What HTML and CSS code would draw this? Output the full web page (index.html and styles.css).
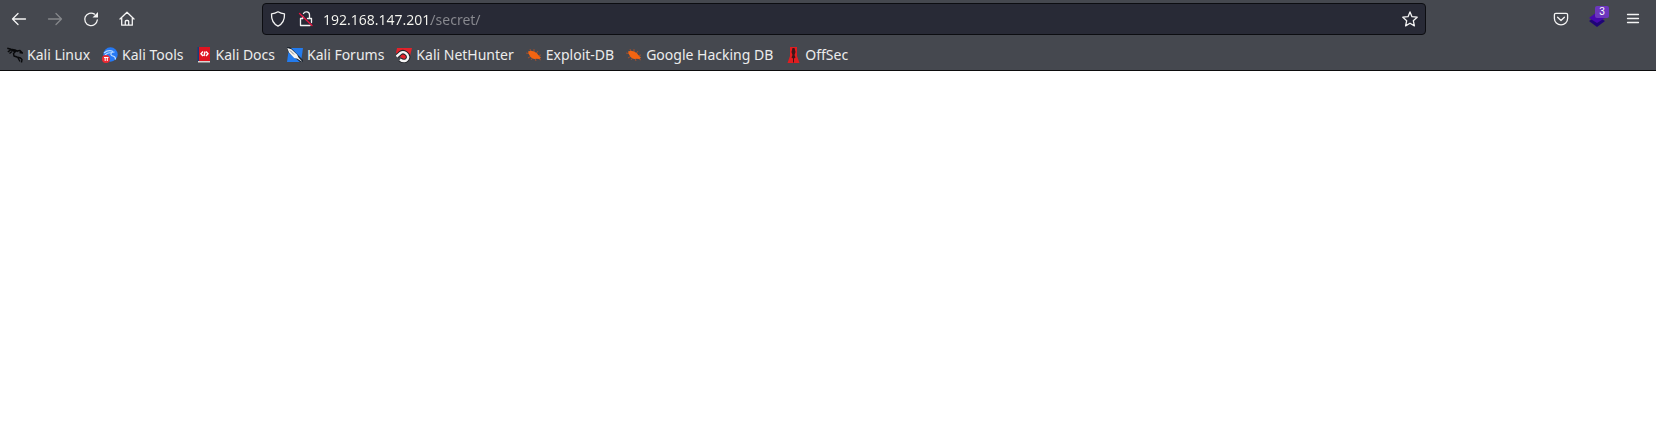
FILE: index.html
```html
<!DOCTYPE html>
<html lang="en">
<head>
    <meta charset="UTF-8">
    <meta name="viewport" content="width=device-width, initial-scale=1.0">
    <title>192.168.147.201/secret/</title>
    <link rel="stylesheet" href="styles.css">
</head>
<body>
    <header class="browser">
        <div class="toolbar">
            <button class="tool" aria-label="Back">
                <svg class="icon" viewBox="0 0 16 16"><path d="M14.500 8H1.500M7 2.500L1.500 8 7 13.500"/></svg>
            </button>
            <button class="tool" aria-label="Forward" disabled>
                <svg class="icon" viewBox="0 0 16 16"><path d="M1.500 8h13M9 2.500L14.500 8 9 13.500"/></svg>
            </button>
            <button class="tool" aria-label="Reload">
                <svg class="icon" viewBox="0 0 16 16"><path d="M11.500 3.100A6.300 6.300 0 1 0 14.300 9"/><path class="solid" d="M15 1v5.500H9.500z"/></svg>
            </button>
            <button class="tool" aria-label="Home">
                <svg class="icon" viewBox="0 0 16 16"><path d="M1 8l7-6.800L15 8M2.700 7v7.200h10.600V7M6.300 14v-3.500q0-1 1-1h1.400q1 0 1 1V14"/></svg>
            </button>
            <div class="spacer"></div>
            <div class="urlbar">
                <button class="inner" aria-label="Tracking protection">
                    <svg class="icon" viewBox="0 0 16 16"><path d="M8 .8c2 1.300 4.200 1.900 6.500 2 .2 5.400-1.500 10-6.500 12.300C3 12.800 1.300 8.200 1.500 2.800 3.800 2.700 6 2.100 8 .8z"/></svg>
                </button>
                <button class="inner inner-lock" aria-label="Connection not secure">
                    <svg class="icon" viewBox="0 0 16 16"><path d="M5.500 2.500A3.200 3.200 0 0 1 11.500 4.200V7.500M9.500 7.500h4v4M4.800 7.500H2.500v7h9.500M4.800 7.500V5.500"/><path class="slash" d="M1.500 2.500l12.500 12"/></svg>
                </button>
                <input class="address" type="text" aria-label="Address" value="192.168.147.201/secret/">
                <button class="inner" aria-label="Bookmark this page">
                    <svg class="icon" viewBox="0 0 16 16"><path d="M8 .9l2 4.800 5.200.5-3.900 3.500 1.100 5.200L8 12.200l-4.400 2.700 1.100-5.200L.8 6.200 6 5.700z"/></svg>
                </button>
            </div>
            <div class="spacer"></div>
            <button class="tool" aria-label="Save to Pocket">
                <svg class="icon" viewBox="0 0 16 16"><path d="M2.800 2.300h10.400q1.400 0 1.400 1.400v3.800a6.600 6.400 0 0 1-13.200 0V3.700q0-1.400 1.400-1.400zM4.600 6.300L8 9.500l3.400-3.200"/></svg>
            </button>
            <button class="tool" aria-label="Wappalyzer">
                <svg class="icon-fill" viewBox="0 0 16 16"><path fill="#1f0477" d="M8 5l8 5-8 6-8-6z"/><path fill="#4608ad" d="M8 1l8 6-8 5-8-5z"/></svg>
                <span class="badge">3</span>
            </button>
            <button class="tool" aria-label="Menu">
                <svg class="icon" viewBox="0 0 16 16"><path d="M2.500 3.500h11M2.500 7.500h11M2.500 11.500h11"/></svg>
            </button>
        </div>
        <nav class="bookmarks">
            <a href="#">
                <svg viewBox="0 0 16 16"><path fill="none" stroke="#08090b" stroke-width="1.400" stroke-linejoin="round" d="M.3 1.200L4 2.200l4 .8 3 1.500M.8 4.800L3.500 3.200M2.500 6.500L5 4.500M9 4L6.500 6.500 7 9l3 1 3.500 1 1.500 1.500-.5 3M10 4l3-.5 2.500 2.500-3-.5M10.500 10l2.500 4.500M4 3l4 1.500"/></svg>
                Kali Linux
            </a>
            <a href="#">
                <svg viewBox="0 0 16 16"><circle cx="8.500" cy="7.500" r="7.200" fill="#2679f4"/><path fill="none" stroke="#b9dcff" stroke-width="1.200" d="M2 6c3-2.500 6-3 9-1.500M3 8c2-2 5-2.500 7-2M12.500 5C8 5 8 8.500 11 9c2 .3 2.500 1.500 2.500 3.500"/><circle cx="4" cy="12" r="4" fill="#ed2932"/><path stroke="#fff" fill="none" d="M2 10.500h4.500M3.200 10.500v3.500M5.300 10.500v3.500"/></svg>
                Kali Tools
            </a>
            <a href="#">
                <svg viewBox="0 0 16 16"><path fill="#1b3a78" d="M1.500 0h3v14h-3z"/><path fill="#df1420" d="M3 0h11v14H3z"/><path fill="#d9d5d3" d="M2 14h12v1.500H2z"/><path fill="none" stroke="#fff" stroke-width="1.400" d="M7 4.500L5 6.800 7 9M10 4.500l2 2.300L10 9M9 4.500L8 9"/></svg>
                Kali Docs
            </a>
            <a href="#">
                <svg viewBox="0 0 16 16"><path fill="#237bed" d="M2 1h14l-2 14H0z"/><path fill="#202833" d="M0 0h3l13 13v2h-3L1 5z"/><path fill="#f4f4f2" d="M.3 1l4 1.200 5.700 5.200 1.500 3 4 4.600-5-3.200-3.300-.8L2 5.500z"/><path stroke="#555" stroke-width=".7" d="M3 3.500l4 4"/></svg>
                Kali Forums
            </a>
            <a href="#">
                <svg viewBox="0 0 16 16"><path fill="#e3222b" d="M1 1h15l-3 12H8L0 6z"/><path fill="none" stroke="#24262b" stroke-width="4.500" d="M1 9.500L4.500 6C8 3.500 13 7.500 12 11s-5 4-8 1.500"/><path fill="none" stroke="#f5f5f5" stroke-width="2.400" d="M.5 9.500L4.500 6C8 3.500 13 7.500 12 11s-5 4-8 1.500"/></svg>
                Kali NetHunter
            </a>
            <a href="#">
                <svg viewBox="0 0 16 16"><path fill="none" stroke="#a9502a" stroke-width=".9" d="M0 6l5 1M2 11l5-3M5 13l3-4M4 2l2 5M8 2v5M12 4L9 8M15 8l-5 1M15 13l-5-3M10 14l-2-5"/><path fill="#f26411" d="M2 4.500l3-.7 3 .7 3 1.800 1.500 2.200 2.500 2-1.500 1.500-2.500-.3-3 .3-3-1.500-2-3z"/></svg>
                Exploit-DB
            </a>
            <a href="#">
                <svg viewBox="0 0 16 16"><path fill="none" stroke="#a9502a" stroke-width=".9" d="M0 6l5 1M2 11l5-3M5 13l3-4M4 2l2 5M8 2v5M12 4L9 8M15 8l-5 1M15 13l-5-3M10 14l-2-5"/><path fill="#f26411" d="M2 4.500l3-.7 3 .7 3 1.800 1.500 2.200 2.500 2-1.500 1.500-2.500-.3-3 .3-3-1.500-2-3z"/></svg>
                Google Hacking DB
            </a>
            <a href="#">
                <svg viewBox="0 0 16 16"><path fill="#e11d20" d="M5 0h7v9l2.500 7h-12L5 9z"/><path fill="#3a1719" d="M7.500 1h2l1 4-1 3 1 2.500-1.500 1v4h-1v-4l-1.500-1 1-2.500-1-3z"/></svg>
                OffSec
            </a>
        </nav>
    </header>
    <main class="page"></main>
</body>
</html>
```
FILE: styles.css
```css
body {
    margin: 0;
    background: #fff;
    font-family: "Noto Sans", sans-serif;
    font-size: 14px;
}
.browser {
    background: #45484f;
    border-bottom: 1px solid #0c0c0d;
}
.toolbar {
    display: flex;
    align-items: center;
    height: 38px;
    padding: 0 5px 0 1px;
}
button {
    display: flex;
    align-items: center;
    justify-content: center;
    flex: none;
    padding: 0;
    border: 0;
    background: none;
    color: #f4f4f4;
}
.tool {
    position: relative;
    width: 36px;
    height: 36px;
}
.tool:disabled {
    color: #85878b;
}
.icon,
.icon-fill {
    width: 16px;
    height: 16px;
}
.icon {
    fill: none;
    stroke: currentColor;
    stroke-width: 1.3;
    stroke-linecap: round;
    stroke-linejoin: round;
}
.icon .solid {
    fill: currentColor;
    stroke: none;
}
.icon .slash {
    stroke: #e8133f;
}
.spacer {
    flex: 0 1 117px;
}
.urlbar {
    display: flex;
    flex: 1;
    align-items: center;
    box-sizing: border-box;
    height: 32px;
    padding: 0 1px;
    border: 1px solid #0c0d11;
    border-radius: 4px;
    background: #282a36;
}
.inner {
    width: 28px;
    height: 28px;
}
.inner-lock {
    margin-right: 3px;
}
.address {
    flex: 1;
    min-width: 0;
    padding: 0;
    border: 0;
    outline: 0;
    font: inherit;
    /* host in white, path dimmed */
    color: transparent;
    background: linear-gradient(90deg, #f8f8f2 108px, #898a90 108px);
    -webkit-background-clip: text;
    background-clip: text;
}
.badge {
    position: absolute;
    top: 5px;
    right: 6px;
    width: 14px;
    height: 12px;
    border-radius: 2px;
    background: #6c36bd;
    color: #fff;
    font-size: 10px;
    line-height: 12px;
    text-align: center;
}
.bookmarks {
    display: flex;
    align-items: center;
    gap: 12px;
    height: 30px;
    padding: 2px 7px 0;
}
.bookmarks a {
    display: flex;
    align-items: center;
    gap: 4px;
    color: #ececec;
    line-height: 20px;
    text-decoration: none;
    white-space: nowrap;
}
.bookmarks svg {
    width: 16px;
    height: 16px;
}
```
